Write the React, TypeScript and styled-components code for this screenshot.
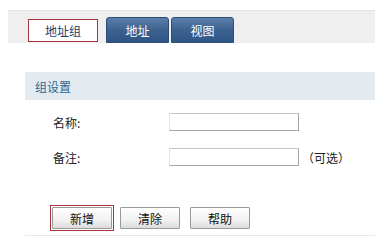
import React from 'react';
import styled, { createGlobalStyle, css } from 'styled-components';

const GlobalStyle = createGlobalStyle`
  body {
    margin: 0;
    background: #ffffff;
    font-family: "Noto Sans CJK SC", "Liberation Sans", sans-serif;
    font-size: 12px;
    color: #222;
  }
`;

const Page = styled.div`
  width: 375px;
  height: 244px;
  overflow: hidden;
`;

const TabBar = styled.div`
  margin: 10px 0 0 8px;
  height: 32px;
  background: #efefef;
  border-top: 1px solid #e4e4e4;
  display: flex;
  align-items: flex-end;
  padding-left: 20px;
`;

const Tab = styled.div<{ $active?: boolean }>`
  box-sizing: border-box;
  display: flex;
  align-items: center;
  justify-content: center;
  font-size: 12px;
  ${(p) =>
    p.$active
      ? css`
          width: 70px;
          height: 23px;
          margin: 0 8px 1px 0;
          background: #fff;
          border: 1px solid #a3373a;
          color: #1e3d6c;
        `
      : css`
          width: 63px;
          height: 26px;
          margin-right: 2px;
          border-radius: 3px 3px 0 0;
          background: linear-gradient(#5b7fa8, #3c6290 50%, #2f5585);
          border: 1px solid #2c4d78;
          color: #fff;
        `}
`;

const Section = styled.div`
  margin: 29px 0 0 25px;
`;

const SectionHeader = styled.div`
  height: 28px;
  background: #e3ebf1;
  padding-left: 10px;
  display: flex;
  align-items: center;
  color: #2f6590;
  font-size: 12px;
`;

const Form = styled.div`
  padding: 13px 0 0 28px;
  display: flex;
  flex-direction: column;
  gap: 17px;
`;

const Row = styled.div`
  display: flex;
  align-items: center;
  height: 18px;
`;

const Label = styled.span`
  width: 116px;
  color: #222;
`;

const Input = styled.input`
  box-sizing: border-box;
  width: 130px;
  height: 18px;
  padding: 0 2px;
  border: 1px solid;
  border-color: #c4c4c4 #a6a6a6 #a6a6a6 #e2e2e2;
  outline: none;
  font-size: 12px;
`;

const Hint = styled.span`
  margin-left: 3px;
  color: #222;
`;

const Buttons = styled.div`
  margin-top: 39px;
  padding: 0 0 4px 25px;
  display: flex;
  align-items: center;
  border-bottom: 1px solid #e8e8e8;
`;

const Focus = styled.div`
  border: 1px solid #a8373a;
  padding: 1px;
  margin-right: 6px;
  display: flex;
`;

const Button = styled.button`
  box-sizing: border-box;
  width: 60px;
  height: 22px;
  margin-right: 10px;
  padding: 0;
  border: 1px solid #9a9a9a;
  border-radius: 1px;
  background: linear-gradient(#ffffff, #f2f2f2 60%, #dcdcdc);
  font-family: "Noto Sans CJK SC", sans-serif;
  font-size: 12px;
  color: #111;
  ${Focus} > & {
    margin-right: 0;
  }
`;

const App: React.FC = () => {
  return (
    <Page>
      <GlobalStyle />
      <TabBar>
        <Tab $active>地址组</Tab>
        <Tab>地址</Tab>
        <Tab>视图</Tab>
      </TabBar>
      <Section>
        <SectionHeader>组设置</SectionHeader>
        <Form>
          <Row>
            <Label>名称:</Label>
            <Input type="text" />
          </Row>
          <Row>
            <Label>备注:</Label>
            <Input type="text" />
            <Hint>（可选）</Hint>
          </Row>
        </Form>
        <Buttons>
          <Focus>
            <Button>新增</Button>
          </Focus>
          <Button>清除</Button>
          <Button>帮助</Button>
        </Buttons>
      </Section>
    </Page>
  );
};

export default App;
